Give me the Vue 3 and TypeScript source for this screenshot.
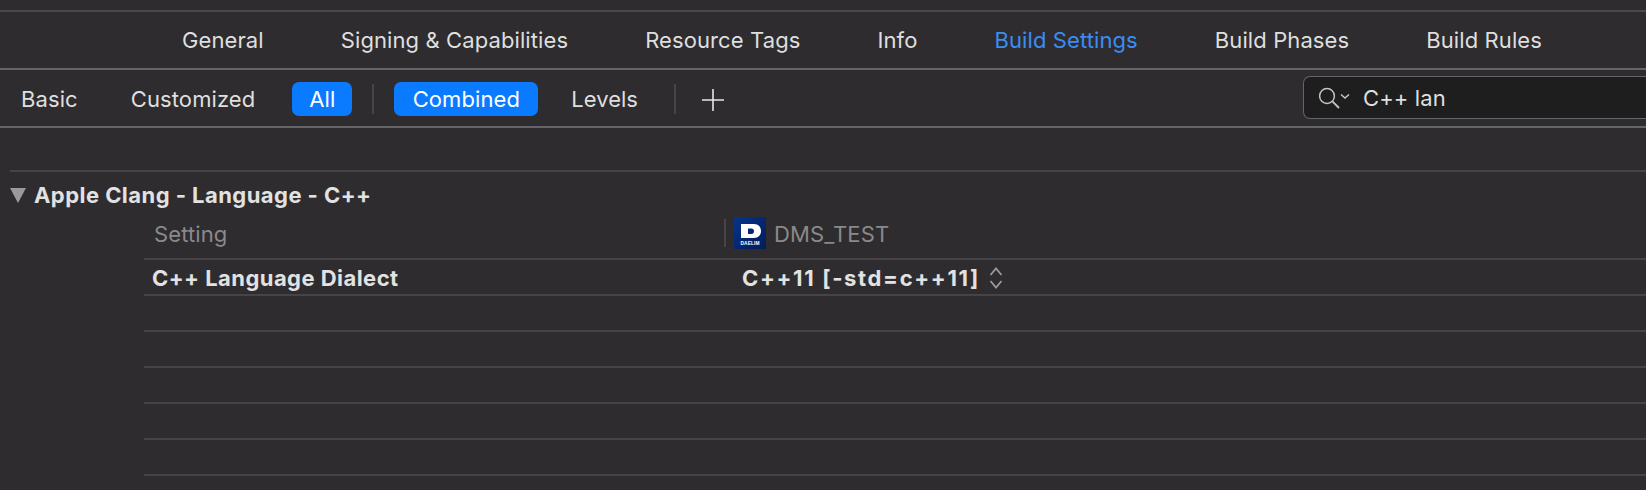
<script setup lang="ts">
const tabs = ['General', 'Signing & Capabilities', 'Resource Tags', 'Info', 'Build Settings', 'Build Phases', 'Build Rules']
const activeTab = 'Build Settings'
const emptyRows = [1, 2, 3, 4, 5]
</script>

<template>
  <div class="page">
    <nav class="tabs">
      <span v-for="t in tabs" :key="t" class="tab" :class="{ active: t === activeTab }">{{ t }}</span>
    </nav>
    <div class="filters">
      <span class="fbtn basic">Basic</span>
      <span class="fbtn customized">Customized</span>
      <span class="fbtn on all">All</span>
      <span class="vsep first"></span>
      <span class="fbtn on combined">Combined</span>
      <span class="fbtn levels">Levels</span>
      <span class="vsep second"></span>
      <svg class="plus" width="24" height="24" viewBox="0 0 24 24">
        <path d="M1 13H23M12 2V24" stroke="#e6e6e6" stroke-width="1.6" fill="none" />
      </svg>
      <div class="search">
        <svg class="glass" width="34" height="26" viewBox="0 0 34 26" fill="none" stroke="#c4c3c5">
          <circle cx="10" cy="11" r="7.4" stroke-width="1.5" />
          <path d="M15.4 16.4L22 23" stroke-width="1.8" />
          <path d="M24 9.5L28 13L32 9.5" stroke-width="1.6" />
        </svg>
        <span class="query">C++ lan</span>
      </div>
    </div>
    <section class="group">
      <div class="group-head">
        <svg class="disclosure" width="16" height="15" viewBox="0 0 16 15">
          <path d="M0 0H16L8 15Z" fill="#9a999b" />
        </svg>
        <span>Apple Clang - Language - C++</span>
      </div>
      <div class="table">
        <div class="thead">
          <span class="col-setting">Setting</span>
          <span class="col-sep"></span>
          <svg class="logo" width="32" height="32" viewBox="0 0 32 32">
            <defs>
              <linearGradient id="lg" x1="0" y1="0" x2="1" y2="1">
                <stop offset="0" stop-color="#06348c" />
                <stop offset="1" stop-color="#021c58" />
              </linearGradient>
            </defs>
            <rect width="32" height="32" fill="url(#lg)" />
            <path fill-rule="evenodd" fill="#fff" d="M7 7H20C24.500 7 27 10 27 14C27 18 24.500 21 20 21H7ZM14 11.500V17H17.500C19 17 20 16 20 14.250C20 12.500 19 11.500 17.500 11.500Z" />
            <text x="16" y="27.500" text-anchor="middle" fill="#fff" font-size="4.800" font-weight="700" font-family="'Liberation Sans', sans-serif">DAELIM</text>
          </svg>
          <span class="target">DMS_TEST</span>
        </div>
        <div class="row">
          <span class="name">C++ Language Dialect</span>
          <span class="value">C++11 [-std=c++11]</span>
          <svg class="stepper" width="14" height="24" viewBox="0 0 14 24" fill="none" stroke="#9a999b" stroke-width="1.8">
            <path d="M1.500 9L7 2.500L12.500 9" />
            <path d="M1.500 15L7 21.500L12.500 15" />
          </svg>
        </div>
        <div v-for="r in emptyRows" :key="r" class="row"></div>
      </div>
    </section>
  </div>
</template>

<style>
html, body { margin: 0; background: #2e2c2f; }
</style>

<style scoped>
.page {
  height: 490px;
  overflow: hidden;
  background: #2e2c2f;
  font-family: Inter, "Liberation Sans", sans-serif;
  font-size: 22px;
  letter-spacing: 0.1px;
  color: #dfdfdf;
  padding-top: 10px;
  box-sizing: border-box;
}
.tabs {
  height: 55px;
  padding-bottom: 1px;
  box-sizing: content-box;
  border-top: 2px solid #4a484b;
  border-bottom: 2px solid #656466;
  display: flex;
  align-items: center;
  gap: 77px;
  padding-left: 182px;
}
.tab { white-space: nowrap; }
.tab.active { color: #3a8df5; }
.filters {
  height: 55px;
  padding-top: 1px;
  border-bottom: 2px solid #656466;
  display: flex;
  align-items: center;
}
.fbtn { white-space: nowrap; }
.basic { margin-left: 21px; }
.customized { margin-left: 53px; }
.on {
  background: #0a7aff;
  color: #fff;
  height: 34px;
  line-height: 34px;
  border-radius: 7px;
  text-align: center;
}
.all { width: 60px; margin-left: 37px; }
.vsep { width: 2px; height: 30px; background: #464447; }
.vsep.first { margin-left: 20px; }
.combined { width: 144px; margin-left: 20px; }
.levels { margin-left: 33px; letter-spacing: 0; }
.vsep.second { margin-left: 36px; }
.plus { margin-left: 25px; }
.search {
  margin-left: auto;
  width: 343px;
  height: 43px;
  box-sizing: border-box;
  margin-top: -2px;
  background: #1e1e1e;
  border: 1.5px solid #666567;
  border-right: 0;
  border-radius: 7px 0 0 7px;
  display: flex;
  align-items: center;
  padding-left: 13px;
}
.query { margin-left: 12px; color: #dfdfdf; }
.group {
  margin-top: 42px;
  border-top: 2px solid #464447;
  margin-left: 10px;
}
.group-head {
  height: 42px;
  padding-top: 2px;
  display: flex;
  align-items: center;
  gap: 8px;
  font-weight: 700;
  letter-spacing: 0.45px;
  color: #e2e2e2;
}
.table { margin-left: 134px; }
.thead {
  height: 34px;
  padding-bottom: 8px;
  border-bottom: 2px solid #464447;
  display: flex;
  align-items: center;
  color: #8a898b;
}
.col-setting { width: 580px; padding: 2px 0 0 10px; box-sizing: border-box; }
.col-sep { width: 2px; height: 28px; background: #464447; margin-right: 8px; }
.target { margin-left: 8px; padding-top: 2px; }
.row {
  height: 32px;
  padding-top: 2px;
  border-bottom: 2px solid #464447;
  display: flex;
  align-items: center;
  font-weight: 700;
  letter-spacing: 0.45px;
  color: #e2e2e2;
}
.name { width: 599px; padding-left: 8px; box-sizing: border-box; }
.value { white-space: nowrap; letter-spacing: 1.65px; margin-left: -1px; }
.stepper { margin-left: 9px; }
</style>
